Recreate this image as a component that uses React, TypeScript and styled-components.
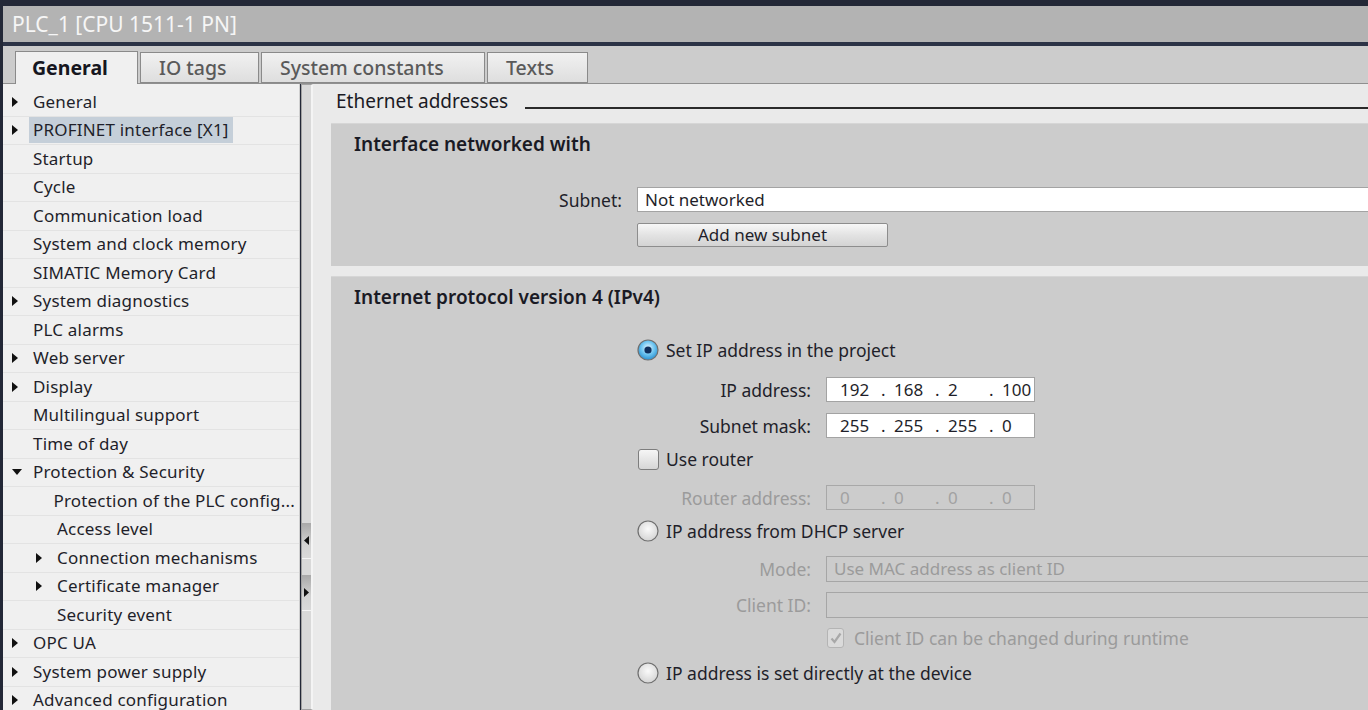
import React from 'react';
import styled, { createGlobalStyle } from 'styled-components';

const GlobalStyle = createGlobalStyle`
  html, body {
    margin: 0;
    padding: 0;
    width: 1368px;
    height: 710px;
    overflow: hidden;
    font-family: "Noto Sans", "Open Sans", sans-serif;
    color: #1f1f2a;
  }
`;

type TreeItem = {
  label: string;
  level: number;
  arrow?: 'right' | 'down';
  selected?: boolean;
};

const treeItems: TreeItem[] = [
  { label: 'General', level: 0, arrow: 'right' },
  { label: 'PROFINET interface [X1]', level: 0, arrow: 'right', selected: true },
  { label: 'Startup', level: 0 },
  { label: 'Cycle', level: 0 },
  { label: 'Communication load', level: 0 },
  { label: 'System and clock memory', level: 0 },
  { label: 'SIMATIC Memory Card', level: 0 },
  { label: 'System diagnostics', level: 0, arrow: 'right' },
  { label: 'PLC alarms', level: 0 },
  { label: 'Web server', level: 0, arrow: 'right' },
  { label: 'Display', level: 0, arrow: 'right' },
  { label: 'Multilingual support', level: 0 },
  { label: 'Time of day', level: 0 },
  { label: 'Protection & Security', level: 0, arrow: 'down' },
  { label: 'Protection of the PLC config...', level: 1 },
  { label: 'Access level', level: 1 },
  { label: 'Connection mechanisms', level: 1, arrow: 'right' },
  { label: 'Certificate manager', level: 1, arrow: 'right' },
  { label: 'Security event', level: 1 },
  { label: 'OPC UA', level: 0, arrow: 'right' },
  { label: 'System power supply', level: 0, arrow: 'right' },
  { label: 'Advanced configuration', level: 0, arrow: 'right' },
];

const tabs = [
  { label: 'General', width: 123 },
  { label: 'IO tags', width: 119 },
  { label: 'System constants', width: 224 },
  { label: 'Texts', width: 101 },
];

function Arrow({ dir }: { dir: 'right' | 'down' }) {
  if (dir === 'down') {
    return (
      <svg width="10" height="6" viewBox="0 0 10 6">
        <path d="M0 0 L10 0 L5 6 Z" fill="#111" />
      </svg>
    );
  }
  return (
    <svg width="6" height="10" viewBox="0 0 6 10">
      <path d="M0 0 L6 5 L0 10 Z" fill="#111" />
    </svg>
  );
}

function Radio({ checked }: { checked?: boolean }) {
  const id = checked ? 'rOn' : 'rOff';
  return (
    <svg width="22" height="22" viewBox="0 0 22 22">
      <defs>
        <radialGradient id={id} cx="50%" cy="40%" r="60%">
          {checked ? (
            <>
              <stop offset="0%" stopColor="#e8f6ff" />
              <stop offset="55%" stopColor="#6cc4f0" />
              <stop offset="100%" stopColor="#2a8fcf" />
            </>
          ) : (
            <>
              <stop offset="0%" stopColor="#fafafa" />
              <stop offset="100%" stopColor="#d4d4d4" />
            </>
          )}
        </radialGradient>
      </defs>
      <circle cx="11" cy="11" r="10" fill={`url(#${id})`} stroke="#6f6f6f" strokeWidth="1.2" />
      {checked && <circle cx="11" cy="11" r="3.6" fill="#0f2f5c" />}
    </svg>
  );
}

function IpValue({ parts, disabled }: { parts: string[]; disabled?: boolean }) {
  return (
    <IpBox $disabled={disabled}>
      {parts.map((p, i) => (
        <React.Fragment key={i}>
          {i > 0 && <IpDot>.</IpDot>}
          <IpPart>{p}</IpPart>
        </React.Fragment>
      ))}
    </IpBox>
  );
}

export default function App() {
  return (
    <>
      <GlobalStyle />
      <Frame>
        <TitleBar>PLC_1 [CPU 1511-1 PN]</TitleBar>
        <TabBar>
          {tabs.map((t, i) => (
            <Tab key={t.label} $active={i === 0} $width={t.width}>
              {t.label}
            </Tab>
          ))}
        </TabBar>
        <Body>
          <Tree>
            {treeItems.map((item) => (
              <TreeRow key={item.label} $level={item.level}>
                <ArrowSlot>{item.arrow && <Arrow dir={item.arrow} />}</ArrowSlot>
                <TreeLabel $selected={item.selected}>{item.label}</TreeLabel>
              </TreeRow>
            ))}
          </Tree>
          <Splitter>
            <SplitButton $top={438}>
              <svg width="5" height="9" viewBox="0 0 5 9">
                <path d="M5 0 L0 4.5 L5 9 Z" fill="#111" />
              </svg>
            </SplitButton>
            <SplitButton $top={16}>
              <svg width="5" height="9" viewBox="0 0 5 9">
                <path d="M0 0 L5 4.5 L0 9 Z" fill="#111" />
              </svg>
            </SplitButton>
          </Splitter>
          <Main>
            <GroupHeader>
              <span>Ethernet addresses</span>
              <HeaderRule />
            </GroupHeader>

            <Section>
              <SectionTitle>Interface networked with</SectionTitle>
              <FormGrid $labelWidth={291} $mt={32}>
                <FieldLabel>Subnet:</FieldLabel>
                <TextBox>Not networked</TextBox>
                <span />
                <PushButton>Add new subnet</PushButton>
              </FormGrid>
              <Spacer $h={19} />
            </Section>

            <Section $grow>
              <SectionTitle>Internet protocol version 4 (IPv4)</SectionTitle>
              <Options>
                <OptionRow $mt={30}>
                  <Radio checked />
                  <OptionText>Set IP address in the project</OptionText>
                </OptionRow>
                <FieldRow $mt={15}>
                  <FieldLabel>IP address:</FieldLabel>
                  <IpValue parts={['192', '168', '2', '100']} />
                </FieldRow>
                <FieldRow $mt={12}>
                  <FieldLabel>Subnet mask:</FieldLabel>
                  <IpValue parts={['255', '255', '255', '0']} />
                </FieldRow>
                <OptionRow $mt={10}>
                  <CheckBox />
                  <OptionText>Use router</OptionText>
                </OptionRow>
                <FieldRow $mt={14}>
                  <FieldLabel $disabled>Router address:</FieldLabel>
                  <IpValue parts={['0', '0', '0', '0']} disabled />
                </FieldRow>
                <OptionRow $mt={10}>
                  <Radio />
                  <OptionText>IP address from DHCP server</OptionText>
                </OptionRow>
                <FieldRow $mt={13} $wide>
                  <FieldLabel $disabled>Mode:</FieldLabel>
                  <DisabledBox $h={26}>Use MAC address as client ID</DisabledBox>
                </FieldRow>
                <FieldRow $mt={12} $wide>
                  <FieldLabel $disabled>Client ID:</FieldLabel>
                  <DisabledBox $h={26} />
                </FieldRow>
                <FieldRow $mt={10} $wide>
                  <span />
                  <CheckLine>
                    <SmallCheck>
                      <svg width="12" height="12" viewBox="0 0 12 12">
                        <path d="M1.5 6.5 L4.5 10 L10.5 1.5" fill="none" stroke="#a8a8a8" strokeWidth="2.2" />
                      </svg>
                    </SmallCheck>
                    <OptionText $disabled>Client ID can be changed during runtime</OptionText>
                  </CheckLine>
                </FieldRow>
                <OptionRow $mt={11}>
                  <Radio />
                  <OptionText>IP address is set directly at the device</OptionText>
                </OptionRow>
              </Options>
            </Section>
          </Main>
        </Body>
      </Frame>
    </>
  );
}

const Frame = styled.div`
  width: 1368px;
  height: 710px;
  box-sizing: border-box;
  padding: 6px 0 0 3px;
  background: #232837;
  display: flex;
  flex-direction: column;
  overflow: hidden;
`;

const TitleBar = styled.div`
  height: 36px;
  flex: none;
  background: #b3b3b3;
  border-bottom: 4px solid #2c3346;
  color: #f6f6f6;
  font-size: 21px;
  line-height: 36px;
  padding-left: 9px;
`;

const TabBar = styled.div`
  height: 38px;
  flex: none;
  background: #cccccc;
  display: flex;
  align-items: flex-end;
  gap: 2px;
  padding-left: 12px;
  border-bottom: 1px solid #8f8f8f;
  box-sizing: border-box;
`;

const Tab = styled.div<{ $active?: boolean; $width: number }>`
  width: ${({ $width }) => $width}px;
  height: ${({ $active }) => ($active ? '33px' : '31px')};
  box-sizing: border-box;
  padding-left: ${({ $active }) => ($active ? '16px' : '18px')};
  margin-bottom: ${({ $active }) => ($active ? '-1px' : '0')};
  border: 1px solid #8a8a8a;
  border-bottom: ${({ $active }) => ($active ? 'none' : '1px solid #8a8a8a')};
  background: ${({ $active }) =>
    $active ? '#f0f0f0' : 'linear-gradient(#f1f1f1, #dedede)'};
  color: ${({ $active }) => ($active ? '#161620' : '#5a5a5a')};
  font-weight: ${({ $active }) => ($active ? 700 : 500)};
  font-size: 19.5px;
  line-height: ${({ $active }) => ($active ? '32px' : '29px')};
  white-space: nowrap;
`;

const Body = styled.div`
  flex: 1;
  display: flex;
  min-height: 0;
`;

const Tree = styled.div`
  width: 297px;
  flex: none;
  background: #f0f0f0;
  padding-top: 4px;
  box-sizing: border-box;
  border-right: 1px solid #d0d0d0;
`;

const TreeRow = styled.div<{ $level: number }>`
  height: 28.5px;
  box-sizing: border-box;
  display: flex;
  align-items: center;
  padding-left: ${({ $level }) => 5 + $level * 24}px;
  border-bottom: 1px solid #e3e3e3;
`;

const ArrowSlot = styled.span`
  width: 17px;
  padding-left: 4px;
  display: flex;
  align-items: center;
  justify-content: flex-start;
`;

const TreeLabel = styled.span<{ $selected?: boolean }>`
  font-size: 17px;
  letter-spacing: 0.2px;
  line-height: 26px;
  padding: 0 4px;
  background: ${({ $selected }) => ($selected ? '#c5cfd9' : 'transparent')};
  white-space: nowrap;
`;

const Splitter = styled.div`
  width: 12px;
  flex: none;
  margin-left: 1px;
  box-sizing: border-box;
  border: 1px solid #a2a2a2;
  border-right: 2px solid #f4f4f4;
  background: #d9d9d9;
  display: flex;
  flex-direction: column;
`;

const SplitButton = styled.div<{ $top: number }>`
  margin-top: ${({ $top }) => $top}px;
  height: 35px;
  flex: none;
  background: linear-gradient(#a9a9a9, #d2d2d2 60%, #d9d9d9);
  border-bottom: 1px solid #f5f5f5;
  display: flex;
  align-items: center;
  justify-content: center;
`;

const Main = styled.div`
  flex: 1;
  min-width: 0;
  background: #eaeaea;
  padding: 4px 0 0 18px;
  display: flex;
  flex-direction: column;
  overflow: hidden;
`;

const GroupHeader = styled.div`
  height: 26px;
  display: flex;
  align-items: center;
  gap: 17px;
  font-size: 19px;
  color: #1a1a24;
  padding-left: 5px;
  margin-bottom: 9px;
`;

const HeaderRule = styled.div`
  flex: 1;
  height: 2px;
  background: #2a2a2a;
  margin-top: 14px;
`;

const Section = styled.div<{ $grow?: boolean }>`
  background: #cccccc;
  border-top: 1px solid #d6d6d6;
  margin-right: -40px;
  margin-bottom: ${({ $grow }) => ($grow ? '0' : '10px')};
  flex: ${({ $grow }) => ($grow ? '1' : 'none')};
  padding-top: 9px;
`;

const SectionTitle = styled.div`
  font-size: 19px;
  font-weight: 600;
  line-height: 22px;
  padding-left: 23px;
  color: #1a1a24;
`;

const FormGrid = styled.div<{ $labelWidth: number; $mt: number }>`
  display: grid;
  grid-template-columns: ${({ $labelWidth }) => $labelWidth}px 1fr;
  column-gap: 15px;
  row-gap: 11px;
  margin-top: ${({ $mt }) => $mt}px;
  align-items: center;
`;

const FieldLabel = styled.span<{ $disabled?: boolean }>`
  text-align: right;
  font-size: 17.5px;
  color: ${({ $disabled }) => ($disabled ? '#9b9b9b' : '#1f1f2a')};
  white-space: nowrap;
`;

const TextBox = styled.div`
  height: 25px;
  box-sizing: border-box;
  background: #fff;
  border: 1px solid #a3a3a3;
  font-size: 17px;
  line-height: 23px;
  padding-left: 7px;
`;

const PushButton = styled.div`
  width: 251px;
  height: 24px;
  box-sizing: border-box;
  border: 1px solid #8d8d8d;
  border-radius: 2px;
  background: linear-gradient(#f7f7f7, #e3e3e3 50%, #d3d3d3);
  font-size: 17px;
  line-height: 22px;
  text-align: center;
`;

const Spacer = styled.div<{ $h: number }>`
  height: ${({ $h }) => $h}px;
`;

const Options = styled.div`
  padding-left: 306px;
  display: flex;
  flex-direction: column;
`;

const OptionRow = styled.div<{ $mt: number }>`
  height: 24px;
  margin-top: ${({ $mt }) => $mt}px;
  display: flex;
  align-items: center;
  gap: 7px;
`;

const OptionText = styled.span<{ $disabled?: boolean }>`
  font-size: 17.5px;
  color: ${({ $disabled }) => ($disabled ? '#9b9b9b' : '#1f1f2a')};
  white-space: nowrap;
`;

const FieldRow = styled.div<{ $mt: number; $wide?: boolean }>`
  height: 24px;
  margin-top: ${({ $mt }) => $mt}px;
  display: grid;
  grid-template-columns: ${({ $wide }) => ($wide ? '174px 1fr' : '174px 209px')};
  column-gap: 15px;
  align-items: center;
`;

const IpBox = styled.div<{ $disabled?: boolean }>`
  height: 25px;
  box-sizing: border-box;
  background: ${({ $disabled }) => ($disabled ? '#cccccc' : '#ffffff')};
  border: 1px solid ${({ $disabled }) => ($disabled ? '#a8a8a8' : '#a3a3a3')};
  color: ${({ $disabled }) => ($disabled ? '#a2a2a2' : '#1f1f2a')};
  display: flex;
  align-items: center;
  padding-left: 13px;
  font-size: 17px;
  white-space: nowrap;
`;

const IpPart = styled.span`
  width: 41px;
  flex: none;
`;

const IpDot = styled.span`
  width: 13px;
  flex: none;
`;

const DisabledBox = styled.div<{ $h: number }>`
  height: ${({ $h }) => $h}px;
  box-sizing: border-box;
  border: 1px solid #a6a6a6;
  background: #cccccc;
  color: #9b9b9b;
  font-size: 17px;
  line-height: ${({ $h }) => $h - 2}px;
  padding-left: 7px;
  white-space: nowrap;
`;

const CheckLine = styled.div`
  display: flex;
  align-items: center;
  gap: 10px;
  margin-left: 1px;
`;

const SmallCheck = styled.span`
  width: 17px;
  height: 20px;
  box-sizing: border-box;
  border: 1px solid #b4b4b4;
  border-radius: 3px;
  background: #dadada;
  display: flex;
  align-items: center;
  justify-content: center;
`;

const CheckBox = styled.span`
  width: 21px;
  height: 21px;
  box-sizing: border-box;
  border: 1px solid #7d7d7d;
  border-radius: 3px;
  background: linear-gradient(#f6f6f6, #d6d6d6);
  margin-left: 1px;
`;
